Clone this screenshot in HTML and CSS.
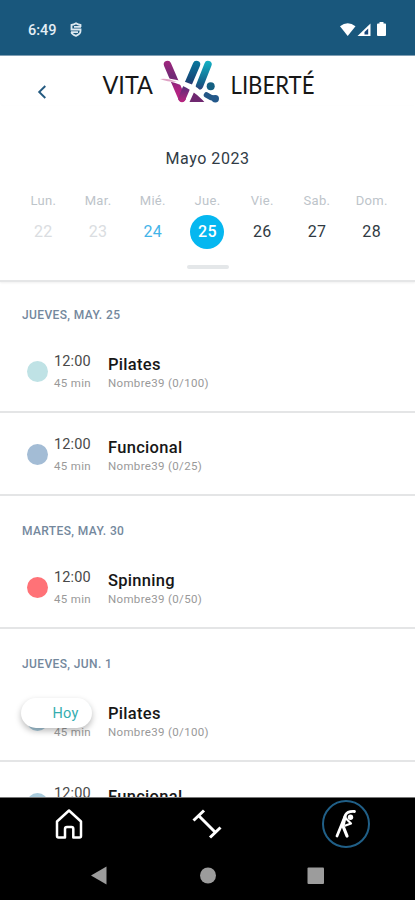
FILE: index.html
```html
<!DOCTYPE html>
<html lang="es">
<head>
<meta charset="utf-8">
<title>Vita Liberté</title>
<link rel="stylesheet" href="styles.css">
</head>
<body>
<div class="screen">
  <header class="status">
    <span class="clock">6:49</span>
    <svg class="shield" width="12" height="15" viewBox="0 0 12 15" fill="none" stroke="#dce8f0" stroke-width="1.8"><path d="M10.500 5V3Q8 2.500 6 1.200Q4 2.500 1.500 3V7.500H10.500V9Q10.500 12 6 13.800Q1.500 12 1.500 10.200"/><path d="M4 4.800H11M1 10.200H8"/></svg>
    <svg class="signals" width="48" height="16" viewBox="0 0 48 16"><path d="M0 4.200Q7.700-1.600 15.500 4.200L7.700 14Z" fill="#fff"/><path d="M17.500 14L30.500 1.500V14Z" fill="#fff"/><path d="M24.500 10L28.200 6.500V12.500H24.500Z" fill="#17457a"/><path d="M39.500 1.500V0H43.500V1.500H45.200Q46 1.500 46 2.500V13Q46 14 45 14H38Q37 14 37 13V2.500Q37 1.500 38 1.500Z" fill="#fff"/></svg>
  </header>

  <div class="brand">
    <svg class="back" width="10" height="14" viewBox="0 0 10 14" fill="none" stroke="#245a80" stroke-width="1.900"><path d="M8.300 1L2.200 7L8.300 13"/></svg>
    <svg class="logo" width="220" height="50" viewBox="100 56 220 50">
      <defs>
        <linearGradient id="left" x1="0" y1="60" x2="0" y2="102" gradientUnits="userSpaceOnUse"><stop offset="0" stop-color="#a3267e"/><stop offset=".4" stop-color="#6f2a75"/><stop offset=".65" stop-color="#a62380"/><stop offset="1" stop-color="#c72386"/></linearGradient>
        <linearGradient id="mid" x1="0" y1="60" x2="0" y2="102" gradientUnits="userSpaceOnUse"><stop offset="0" stop-color="#087a9f"/><stop offset=".5" stop-color="#174576"/><stop offset=".7" stop-color="#6b2b79"/><stop offset="1" stop-color="#b9257f"/></linearGradient>
        <linearGradient id="right" x1="0" y1="60" x2="0" y2="102" gradientUnits="userSpaceOnUse"><stop offset="0" stop-color="#13b5c7"/><stop offset=".55" stop-color="#156089"/><stop offset=".75" stop-color="#383b78"/><stop offset="1" stop-color="#77286f"/></linearGradient>
      </defs>
      <text class="wordmark" x="102.500" y="93.500" textLength="50.500" lengthAdjust="spacingAndGlyphs">VITA</text>
      <g fill="none" stroke-width="7.400" stroke-linecap="round">
        <path d="M167.500 64.500L182 98.300" stroke="url(#left)"/>
        <path d="M196.500 64.500L182 98.300" stroke="url(#mid)"/>
        <path d="M208 64.500L199.500 86" stroke="url(#right)"/>
      </g>
      <path d="M189.500 102L195.500 89L208 102Z" fill="#6f2870"/>
      <path d="M160 78Q178 78.500 192 84.500Q203 90 212 105H207Q198 94 186 87.500Q176 82 160 79.500Z" fill="#fff"/>
      <path d="M160 79Q167 77.500 177 82Q167 82 160 79Z" fill="#dfa3c5"/>
      <path d="M206.500 95Q210 97.500 215 98.700" fill="none" stroke="#245786" stroke-width="5.500" stroke-linecap="round"/>
      <circle cx="215.300" cy="98.700" r="3.700" fill="#23588a"/>
      <circle cx="210.700" cy="86.300" r="4" fill="#156082"/>
      <text class="wordmark" x="230.500" y="93.500" textLength="84" lengthAdjust="spacingAndGlyphs">LIBERTÉ</text>
    </svg>
  </div>

  <section class="calendar">
    <h1 class="month">Mayo 2023</h1>
    <div class="week">
      <div class="day past"><span>Lun.</span><b>22</b></div>
      <div class="day past"><span>Mar.</span><b>23</b></div>
      <div class="day today"><span>Mié.</span><b>24</b></div>
      <div class="day selected"><span>Jue.</span><b>25</b></div>
      <div class="day"><span>Vie.</span><b>26</b></div>
      <div class="day"><span>Sab.</span><b>27</b></div>
      <div class="day"><span>Dom.</span><b>28</b></div>
    </div>
    <div class="handle"></div>
  </section>

  <main class="agenda">
    <h2 class="date first">JUEVES, MAY. 25</h2>
    <article class="item"><i class="dot teal"></i><div class="time"><b>12:00</b><span>45 min</span></div><div class="info"><b>Pilates</b><span>Nombre39 (0/100)</span></div></article>
    <article class="item"><i class="dot blue"></i><div class="time"><b>12:00</b><span>45 min</span></div><div class="info"><b>Funcional</b><span>Nombre39 (0/25)</span></div></article>
    <h2 class="date">MARTES, MAY. 30</h2>
    <article class="item"><i class="dot red"></i><div class="time"><b>12:00</b><span>45 min</span></div><div class="info"><b>Spinning</b><span>Nombre39 (0/50)</span></div></article>
    <h2 class="date">JUEVES, JUN. 1</h2>
    <article class="item"><i class="dot sky"></i><div class="time"><b>12:00</b><span>45 min</span></div><div class="info"><b>Pilates</b><span>Nombre39 (0/100)</span></div><button class="hoy">Hoy</button></article>
    <article class="item"><i class="dot sky"></i><div class="time"><b>12:00</b><span>45 min</span></div><div class="info"><b>Funcional</b><span>Nombre39 (0/25)</span></div></article>
  </main>

  <footer class="bottom">
    <nav class="tabs">
      <span class="tab"><svg width="30" height="32" viewBox="0 0 30 32" fill="none" stroke="#fff" stroke-width="2.500" stroke-linejoin="round"><path d="M15 2.500L27 13.500V28Q27 29.500 25.500 29.500H19.300V21Q19.300 19 17.500 19H13Q11 19 11 21V29.500H4.500Q3 29.500 3 28V13.500Z"/></svg></span>
      <span class="tab"><svg width="30" height="30" viewBox="0 0 30 30" fill="none" stroke="#fff" stroke-width="3"><path d="M1.500 11.500L12 1.500M18 28.500L28.500 18.500M6.500 6.500L23.500 23.500"/></svg></span>
      <span class="tab active"><svg width="26" height="32" viewBox="0 0 26 32" fill="none" stroke="#fff" stroke-linecap="round" stroke-linejoin="round"><path d="M21.500 3.500Q14.500 3 12.500 7L8.500 17L4 28" stroke-width="2.800"/><path d="M12 9L10 18L14 28" stroke-width="3.200"/><path d="M12.500 10L18 15.500L12.500 17.500" stroke-width="2.200"/><circle cx="17.500" cy="9.300" r="2.700" fill="#fff" stroke="none"/></svg></span>
    </nav>
    <div class="system">
      <svg width="415" height="40" viewBox="0 0 415 40" fill="#9c9c9c"><path d="M91 20.500L106.500 11.500V29.500Z"/><circle cx="208" cy="20.500" r="8"/><rect x="307.500" y="12.500" width="16.500" height="16.500" rx="1"/></svg>
    </div>
  </footer>
</div>
</body>
</html>
```
FILE: styles.css
```css
* { box-sizing: border-box; }
body { margin: 0; background: #fff; font-family: Roboto, "Liberation Sans", sans-serif; }
svg { display: block; flex: none; }
.screen { width: 415px; height: 900px; overflow: hidden; display: flex; flex-direction: column; background: #fff; }

.status { height: 56px; flex: none; display: flex; align-items: center; padding: 4px 27px 0 28px; background: #19577c; border-bottom: 1px solid #7f9eb3; }
.clock { width: 42px; padding-top: 1px; font-size: 14.5px; font-weight: 500; color: #e4eef5; }
.signals { margin-left: auto; }

.brand { height: 50px; flex: none; display: flex; align-items: flex-start; padding-left: 37px; }
.back { margin-top: 29px; }
.logo { margin-left: 53px; }
.wordmark { font: 400 25.500px Lato, sans-serif; fill: #171717; }

.calendar { height: 176px; flex: none; padding-top: 42px; border-bottom: 2px solid #e5e6e7; box-shadow: 0 1px 2px #f0f0f0; }
.month { margin: 0; text-align: center; font-size: 16px; line-height: 22px; font-weight: 400; letter-spacing: .55px; color: #303b45; }
.week { display: grid; grid-template-columns: repeat(7, 1fr); padding: 0 16px; margin-top: 22px; }
.day { display: flex; flex-direction: column; align-items: center; }
.day span { font-size: 13px; line-height: 18px; letter-spacing: .3px; color: #bdc4ca; }
.day b { width: 34px; height: 34px; margin-top: 5px; border-radius: 50%; text-align: center; font-size: 16px; line-height: 34px; font-weight: 400; letter-spacing: .3px; color: #303a42; }
.day.past b { color: #dadde1; }
.day.today b { color: #43b4e8; }
.day.selected b { background: #05b7f0; color: #fff; font-weight: 500; }
.handle { width: 42px; height: 4px; margin: 16px auto 0; border-radius: 2px; background: #e4e7e9; }

.agenda { height: 515px; flex: none; overflow: hidden; }
.date { height: 50px; margin: 0; padding: 26px 0 0 22px; font-size: 12px; line-height: 18px; font-weight: 500; letter-spacing: .38px; color: #74889d; }
.date.first { height: 48px; padding-top: 24px; }
.item { position: relative; height: 83px; display: flex; align-items: flex-start; padding: 21px 0 0 27px; border-bottom: 2px solid #e4e5e6; }
.dot { width: 21px; height: 21px; margin-top: 10px; border-radius: 50%; }
.teal { background: #bfe2e5; }
.blue { background: #a3bcd5; }
.red { background: #ff7277; }
.sky { background: #a9cbdc; }
.time { width: 60px; padding: 1px 0 0 6px; }
.time b, .info b, .time span, .info span { display: block; white-space: nowrap; }
.time b { font-size: 14.500px; line-height: 20px; font-weight: 400; letter-spacing: .15px; color: #494949; }
.time span, .info span { font-size: 11.500px; line-height: 16px; letter-spacing: .34px; color: #999; }
.time span { margin-top: 3px; }
.info { padding-top: 4px; }
.info b { font-size: 16.500px; line-height: 20px; font-weight: 500; letter-spacing: .3px; color: #171717; }
.info span { margin-top: 0; }
.hoy { position: absolute; left: 21px; top: 19px; width: 71px; height: 30px; padding: 0 0 0 18px; border: 0; border-radius: 15px; background: #fff; box-shadow: 0 3px 6px rgba(0,0,0,.27); font: 400 14.500px Roboto, sans-serif; letter-spacing: .2px; color: #34adb0; }

.bottom { height: 103px; flex: none; background: #000; border-top: 1px solid #777; }
.tabs { height: 57px; display: grid; grid-template-columns: repeat(3, 1fr); }
.tab { display: flex; align-items: center; justify-content: center; padding-bottom: 5px; }
.tab.active { width: 48px; height: 48px; margin: 2px auto 0; padding: 0; border: 2px solid #205f87; border-radius: 50%; }
.system { height: 40px; }
```
